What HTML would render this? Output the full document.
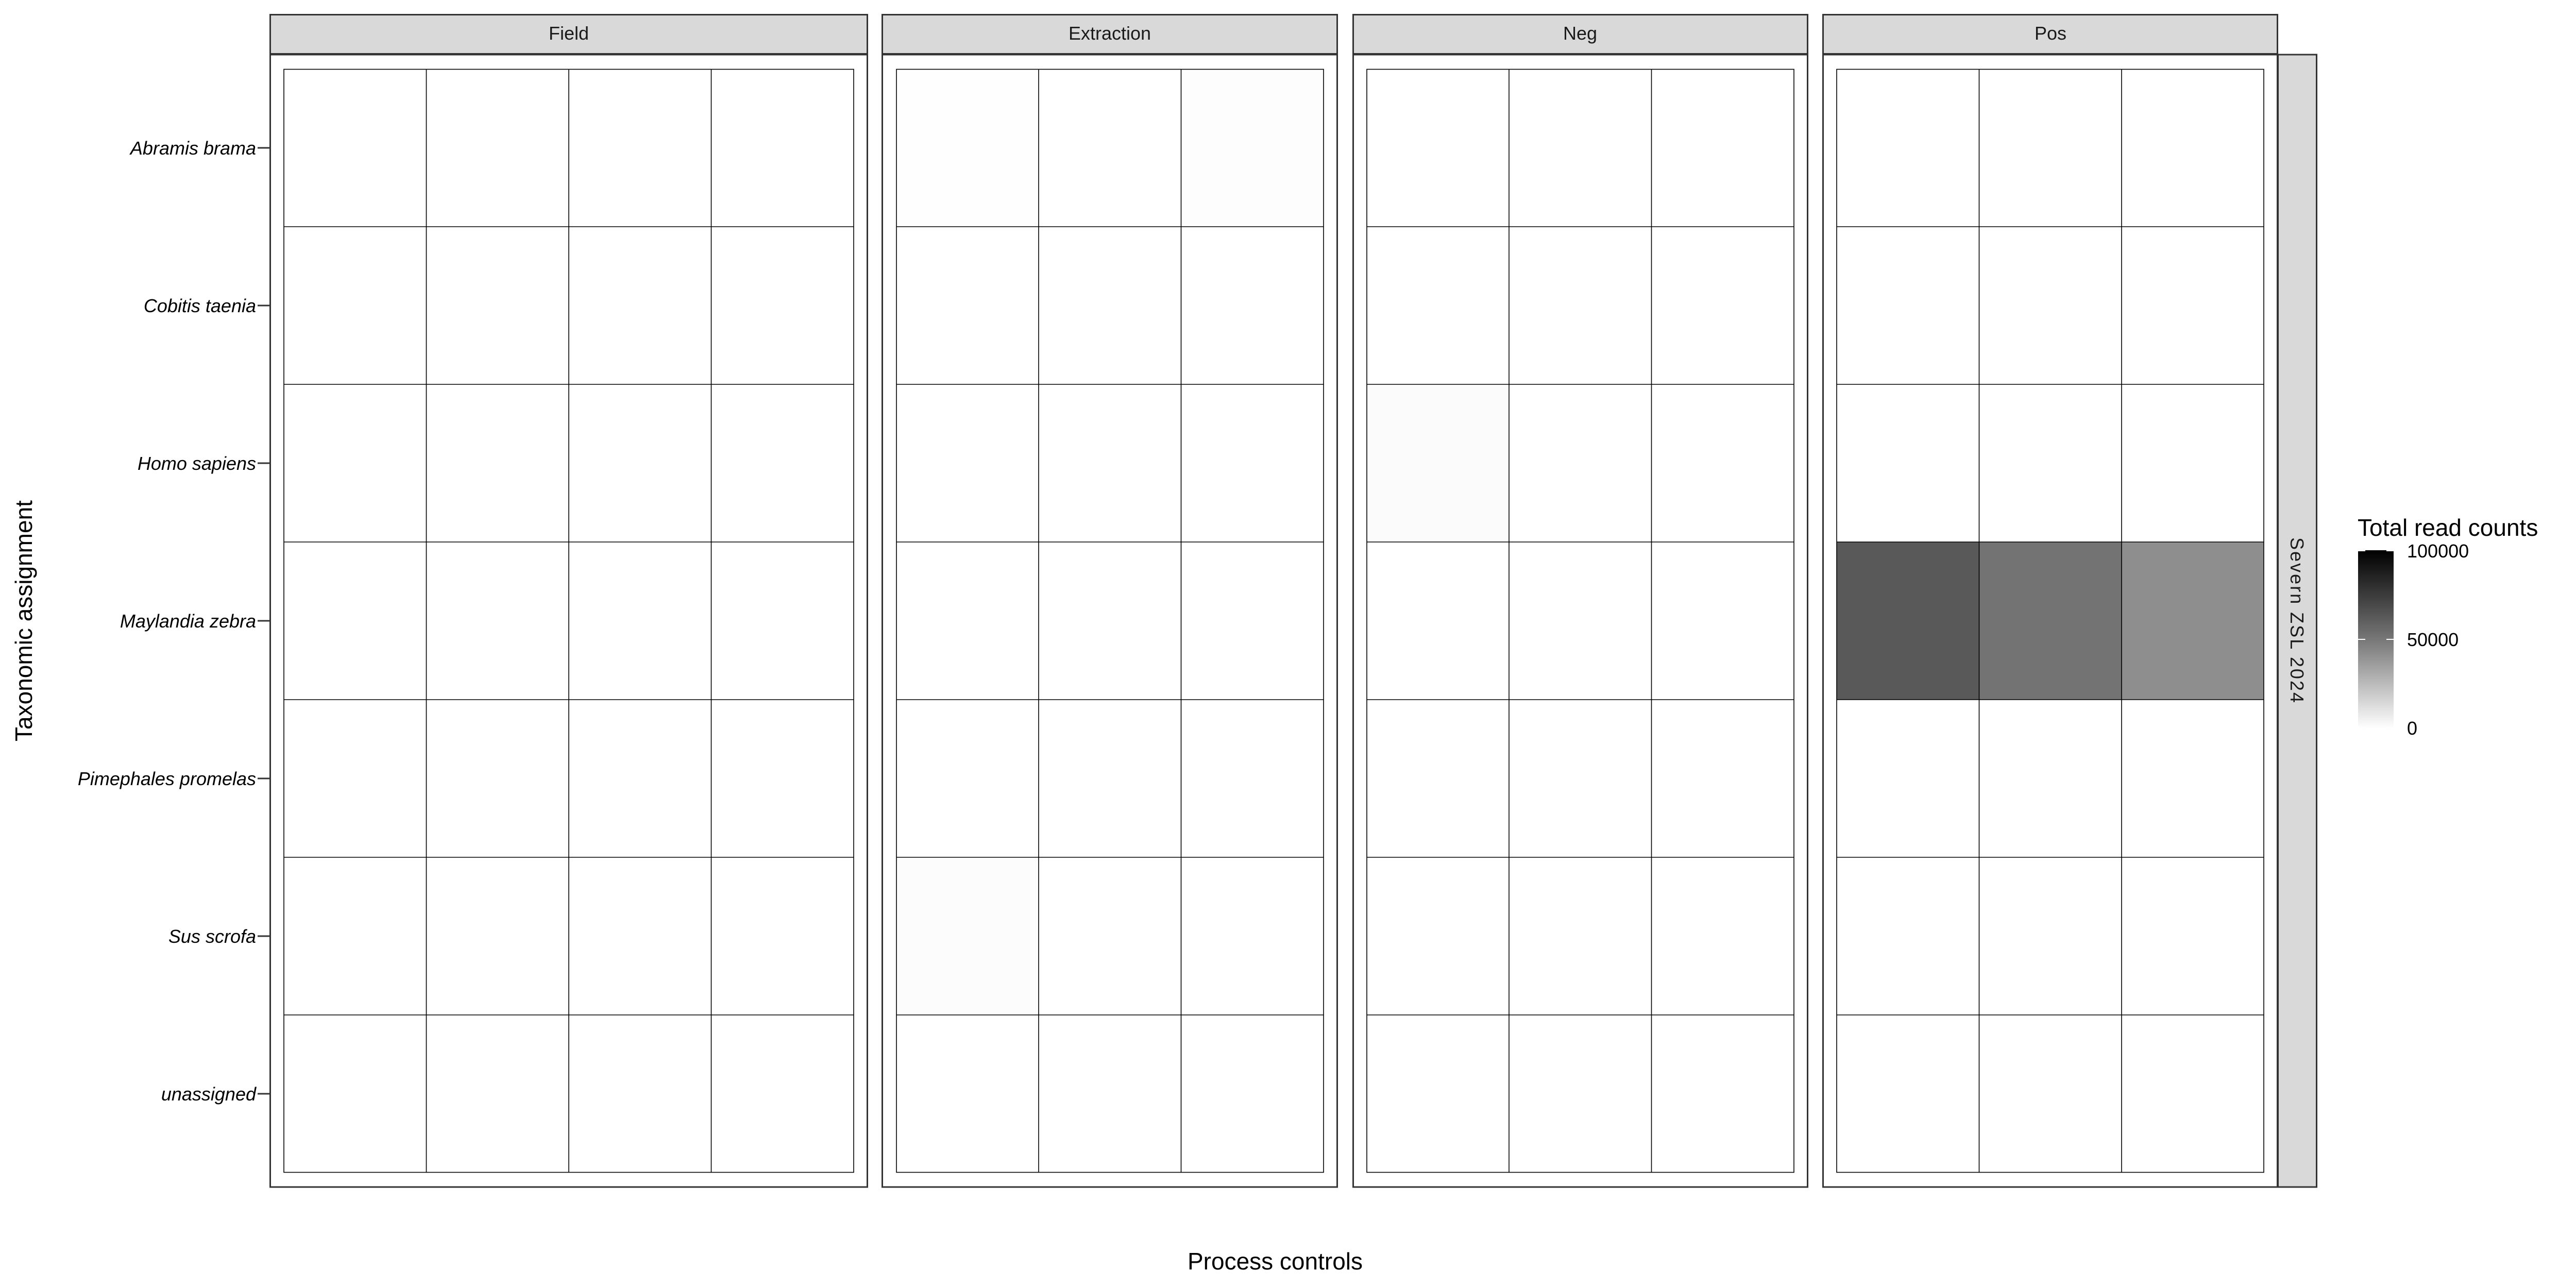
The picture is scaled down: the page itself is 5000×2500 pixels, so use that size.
<!DOCTYPE html>
<html><head><meta charset="utf-8"><style>
html,body{margin:0;padding:0;background:#fff;}
svg{display:block;}
text{font-family:"Liberation Sans",Arial,sans-serif;}
</style></head><body>
<svg width="5000" height="2500" viewBox="0 0 5000 2500" xmlns="http://www.w3.org/2000/svg">
<defs>
<linearGradient id="cb" x1="0" y1="1" x2="0" y2="0">
<stop offset="0" stop-color="#ffffff"/>
<stop offset="0.5" stop-color="#777777"/>
<stop offset="1" stop-color="#000000"/>
</linearGradient>
</defs>
<rect width="5000" height="2500" fill="#fff"/>

<!-- Field panel -->
<rect x="524.5" y="106" width="1159" height="2198" fill="#fff" stroke="#333" stroke-width="3"/>
<rect x="524.5" y="28.5" width="1159" height="76" fill="#d9d9d9" stroke="#333" stroke-width="3"/>
<text x="1104" y="77" font-size="36" text-anchor="middle" fill="#1a1a1a">Field</text>
<g stroke="#000" stroke-width="1.6" fill="none">
<rect x="551" y="134.5" width="1106" height="2141"/>
<line x1="827.5" y1="134" x2="827.5" y2="2276"/>
<line x1="1104" y1="134" x2="1104" y2="2276"/>
<line x1="1380.5" y1="134" x2="1380.5" y2="2276"/>
</g>

<!-- Extraction panel -->
<rect x="1712.5" y="106" width="883" height="2198" fill="#fff" stroke="#333" stroke-width="3"/>
<rect x="1740" y="134" width="276" height="306" fill="#fefefe"/>
<rect x="2292" y="134" width="277" height="306" fill="#fdfdfd"/>
<rect x="1740" y="1664" width="276" height="306" fill="#fcfcfc"/>
<rect x="1712.5" y="28.5" width="883" height="76" fill="#d9d9d9" stroke="#333" stroke-width="3"/>
<text x="2154" y="77" font-size="36" text-anchor="middle" fill="#1a1a1a">Extraction</text>
<g stroke="#000" stroke-width="1.6" fill="none">
<rect x="1740" y="134.5" width="829" height="2141"/>
<line x1="2016" y1="134" x2="2016" y2="2276"/>
<line x1="2292.5" y1="134" x2="2292.5" y2="2276"/>
</g>

<!-- Neg panel -->
<rect x="2626.5" y="106" width="882" height="2198" fill="#fff" stroke="#333" stroke-width="3"/>
<rect x="2653" y="746" width="276" height="306" fill="#fbfbfb"/>
<rect x="2626.5" y="28.5" width="882" height="76" fill="#d9d9d9" stroke="#333" stroke-width="3"/>
<text x="3067" y="77" font-size="36" text-anchor="middle" fill="#1a1a1a">Neg</text>
<g stroke="#000" stroke-width="1.6" fill="none">
<rect x="2653" y="134.5" width="829" height="2141"/>
<line x1="2929" y1="134" x2="2929" y2="2276"/>
<line x1="3205.5" y1="134" x2="3205.5" y2="2276"/>
</g>

<!-- Pos panel -->
<rect x="3538.5" y="106" width="882" height="2198" fill="#fff" stroke="#333" stroke-width="3"/>
<rect x="3565" y="1052" width="277" height="306" fill="#595959"/>
<rect x="3842" y="1052" width="276" height="306" fill="#737373"/>
<rect x="4118" y="1052" width="276" height="306" fill="#8e8e8e"/>
<rect x="3538.5" y="28.5" width="882" height="76" fill="#d9d9d9" stroke="#333" stroke-width="3"/>
<text x="3980" y="77" font-size="36" text-anchor="middle" fill="#1a1a1a">Pos</text>
<g stroke="#000" stroke-width="1.6" fill="none">
<rect x="3565" y="134.5" width="829" height="2141"/>
<line x1="3841.5" y1="134" x2="3841.5" y2="2276"/>
<line x1="4118" y1="134" x2="4118" y2="2276"/>
</g>

<!-- horizontal row lines -->
<g stroke="#000" stroke-width="1.6">
<line x1="551" x2="1657" y1="440" y2="440"/><line x1="1740" x2="2569" y1="440" y2="440"/><line x1="2653" x2="3482" y1="440" y2="440"/><line x1="3565" x2="4394" y1="440" y2="440"/>
<line x1="551" x2="1657" y1="746" y2="746"/><line x1="1740" x2="2569" y1="746" y2="746"/><line x1="2653" x2="3482" y1="746" y2="746"/><line x1="3565" x2="4394" y1="746" y2="746"/>
<line x1="551" x2="1657" y1="1052" y2="1052"/><line x1="1740" x2="2569" y1="1052" y2="1052"/><line x1="2653" x2="3482" y1="1052" y2="1052"/><line x1="3565" x2="4394" y1="1052" y2="1052"/>
<line x1="551" x2="1657" y1="1358" y2="1358"/><line x1="1740" x2="2569" y1="1358" y2="1358"/><line x1="2653" x2="3482" y1="1358" y2="1358"/><line x1="3565" x2="4394" y1="1358" y2="1358"/>
<line x1="551" x2="1657" y1="1664" y2="1664"/><line x1="1740" x2="2569" y1="1664" y2="1664"/><line x1="2653" x2="3482" y1="1664" y2="1664"/><line x1="3565" x2="4394" y1="1664" y2="1664"/>
<line x1="551" x2="1657" y1="1970" y2="1970"/><line x1="1740" x2="2569" y1="1970" y2="1970"/><line x1="2653" x2="3482" y1="1970" y2="1970"/><line x1="3565" x2="4394" y1="1970" y2="1970"/>
</g>

<!-- right strip -->
<rect x="4421.5" y="106" width="75" height="2198" fill="#d9d9d9" stroke="#333" stroke-width="3"/>
<text transform="translate(4446,1205) rotate(90)" font-size="36" text-anchor="middle" fill="#1a1a1a" letter-spacing="3">Severn ZSL 2024</text>

<!-- y ticks and labels -->
<g stroke="#333" stroke-width="3">
<line x1="500" x2="523" y1="287" y2="287"/>
<line x1="500" x2="523" y1="593" y2="593"/>
<line x1="500" x2="523" y1="899" y2="899"/>
<line x1="500" x2="523" y1="1205" y2="1205"/>
<line x1="500" x2="523" y1="1511" y2="1511"/>
<line x1="500" x2="523" y1="1817" y2="1817"/>
<line x1="500" x2="523" y1="2123" y2="2123"/>
</g>
<g font-size="36" font-style="italic" text-anchor="end" fill="#000">
<text x="497" y="300">Abramis brama</text>
<text x="497" y="606">Cobitis taenia</text>
<text x="497" y="912">Homo sapiens</text>
<text x="497" y="1218">Maylandia zebra</text>
<text x="497" y="1524">Pimephales promelas</text>
<text x="497" y="1830">Sus scrofa</text>
<text x="497" y="2136">unassigned</text>
</g>

<!-- axis titles -->
<text transform="translate(62,1205) rotate(-90)" font-size="46" text-anchor="middle" fill="#000">Taxonomic assignment</text>
<text x="2475" y="2464" font-size="46" text-anchor="middle" fill="#000">Process controls</text>

<!-- legend -->
<text x="4576" y="1040" font-size="46" fill="#000">Total read counts</text>
<rect x="4577" y="1068" width="69" height="346" fill="url(#cb)"/>
<g stroke="#fff" stroke-width="2">
<line x1="4577" x2="4591" y1="1069" y2="1069"/><line x1="4632" x2="4646" y1="1069" y2="1069"/>
<line x1="4577" x2="4591" y1="1241" y2="1241"/><line x1="4632" x2="4646" y1="1241" y2="1241"/>
<line x1="4577" x2="4591" y1="1413" y2="1413"/><line x1="4632" x2="4646" y1="1413" y2="1413"/>
</g>
<g font-size="36" fill="#000">
<text x="4672" y="1082">100000</text>
<text x="4672" y="1254">50000</text>
<text x="4672" y="1426">0</text>
</g>
</svg>
</body></html>
